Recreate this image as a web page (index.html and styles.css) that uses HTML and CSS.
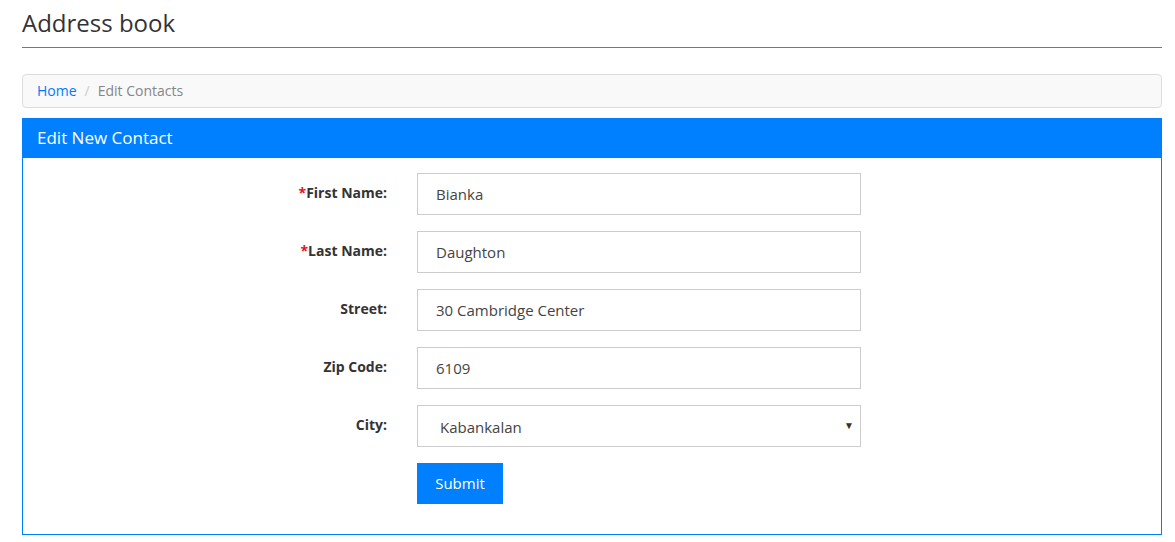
FILE: index.html
```html
<!DOCTYPE html>
<html>
<head>
<meta charset="utf-8">
<link rel="stylesheet" href="styles.css">
</head>
<body>
<div class="container">
  <h1 class="title">Address book</h1>
  <nav class="breadcrumb">
    <a href="#" class="crumb-link">Home</a>
    <span class="crumb-sep">/</span>
    <span class="crumb-active">Edit Contacts</span>
  </nav>
  <div class="panel">
    <div class="panel-head">Edit New Contact</div>
    <form class="panel-body">
      <div class="row">
        <label class="lbl"><span class="req">*</span>First Name:</label>
        <div class="field"><input class="ctl" type="text" value="Bianka"></div>
      </div>
      <div class="row">
        <label class="lbl"><span class="req">*</span>Last Name:</label>
        <div class="field"><input class="ctl" type="text" value="Daughton"></div>
      </div>
      <div class="row">
        <label class="lbl">Street:</label>
        <div class="field"><input class="ctl" type="text" value="30 Cambridge Center"></div>
      </div>
      <div class="row">
        <label class="lbl">Zip Code:</label>
        <div class="field"><input class="ctl" type="text" value="6109"></div>
      </div>
      <div class="row">
        <label class="lbl">City:</label>
        <div class="field">
          <div class="select">
            <span class="select-val">Kabankalan</span>
            <span class="caret">&#9660;</span>
          </div>
        </div>
      </div>
      <div class="row">
        <div class="lbl"></div>
        <div class="field"><button type="button" class="btn">Submit</button></div>
      </div>
    </form>
  </div>
</div>
</body>
</html>
```
FILE: styles.css
```css
* { box-sizing: border-box; }
html, body { margin: 0; padding: 0; background: #fff; }
body {
  font-family: "Open Sans", "Liberation Sans", sans-serif;
  color: #333;
  font-size: 14px;
}
.container {
  width: 1140px;
  margin-left: 22px;
}
.title {
  margin: 0;
  padding-top: 6px;
  height: 48px;
  font-size: 24px;
  font-weight: 400;
  line-height: 34px;
  color: #333;
  border-bottom: 1px solid #3b86c4;
}
.breadcrumb {
  margin-top: 26px;
  height: 34px;
  background: #f9f9f9;
  border: 1px solid #ddd;
  border-radius: 4px;
  padding: 0 14px 2px;
  display: flex;
  align-items: center;
  font-size: 14px;
}
.crumb-link { color: #007bff; text-decoration: none; }
.crumb-sep { color: #ccc; padding: 0 8px; }
.crumb-active { color: #868686; }
.panel {
  margin-top: 10px;
  border: 1px solid #007fff;
  width: 1140px;
}
.panel-head {
  background: #007fff;
  color: #fff;
  height: 40px;
  line-height: 40px;
  font-size: 17px;
  padding-left: 15px;
  margin: -1px -1px 0 -1px;
}
.panel-body {
  padding: 15px 0 14px;
  margin: 0;
}
.row {
  display: grid;
  grid-template-columns: 379px 474px 1fr;
  margin-bottom: 16px;
}
.lbl {
  padding: 10px 15px 0 15px;
  text-align: right;
  font-weight: 700;
  font-size: 14px;
  color: #333;
}
.req { color: #e8101a; }
.field { padding: 0 15px; }
.ctl {
  display: block;
  width: 444px;
  height: 42px;
  border: 1px solid #ccc;
  border-radius: 0;
  padding: 0 18px;
  font-family: "Open Sans", "Liberation Sans", sans-serif;
  font-size: 15px;
  color: #444;
  background: #fff;
  outline: none;
}
.select {
  width: 444px;
  height: 42px;
  border: 1px solid #ccc;
  display: flex;
  align-items: center;
  justify-content: space-between;
  padding: 1px 6px 0 22px;
  font-size: 15px;
  color: #444;
}
.caret { font-size: 10px; color: #333; margin-top: -3px; }
.btn {
  width: 86px;
  height: 41px;
  background: #007fff;
  color: #fff;
  border: none;
  border-radius: 0;
  font-family: "Open Sans", "Liberation Sans", sans-serif;
  font-size: 15px;
  padding: 0 0 2px;
}
```
